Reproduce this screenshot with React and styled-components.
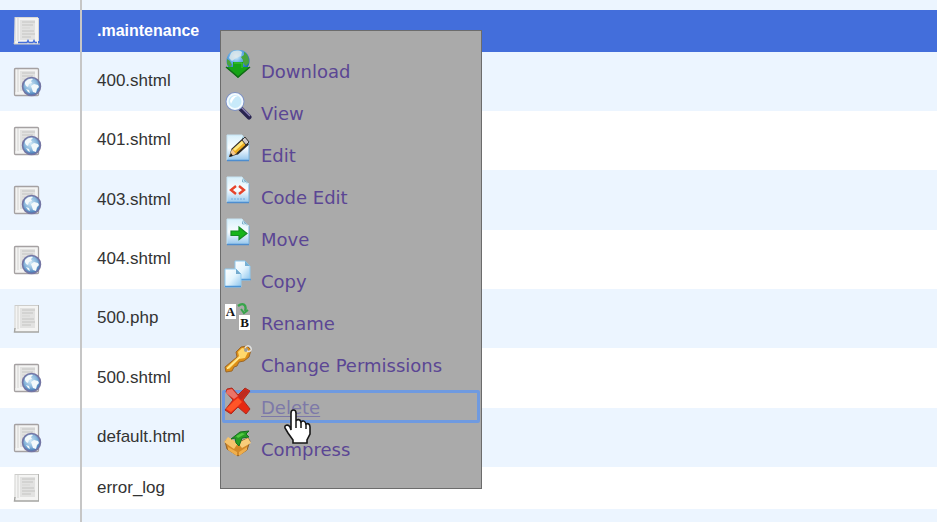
import styled, { createGlobalStyle } from "styled-components";

const GlobalStyle = createGlobalStyle`
  body {
    margin: 0;
    background: #fff;
    font-family: "Liberation Sans", Arial, sans-serif;
  }
`;

const Page = styled.main`
  position: relative;
  height: 100vh;
  overflow: hidden;
`;

const FileTable = styled.table`
  width: 100%;
  border-collapse: separate;
  border-spacing: 0;
`;

const rowHeights = { edge: 10, short: 42, tall: 59 };

const FileRow = styled.tr`
  height: ${(props) => rowHeights[props.$size]}px;
  background: ${(props) => (props.$selected ? "#436edb" : "#fff")};
  color: ${(props) => (props.$selected ? "#fff" : "#333")};
  font-size: ${(props) => (props.$selected ? "16px" : "17px")};
  font-weight: ${(props) => (props.$selected ? "bold" : "normal")};

  &:nth-child(odd) {
    background: #ecf5ff;
  }

  &:nth-child(3n + 5) {
    height: 60px;
  }
`;

const IconCell = styled.td`
  box-sizing: border-box;
  width: 82px;
  padding: 0 0 0 13px;
  border-right: 2px solid #c6c6c6;

  svg {
    display: block;
  }
`;

const NameCell = styled.td`
  padding: 0 16px 1px 15px;
  line-height: 20px;
`;

const Menu = styled.nav`
  position: absolute;
  top: 30px;
  left: 220px;
  box-sizing: border-box;
  width: 262px;
  padding: 23px 1px;
  border: 1px solid #6c6c6c;
  background: #aaa;
`;

const MenuList = styled.ul`
  display: flex;
  flex-direction: column;
  gap: 9px;
  margin: 0;
  padding: 0;
  list-style: none;
`;

const MenuLink = styled.a`
  display: flex;
  align-items: flex-start;
  gap: 9px;
  height: 33px;
  padding-left: 2px;
  color: ${(props) => (props.$active ? "#7d79a8" : "#5b4694")};
  font-family: "DejaVu Sans", Verdana, sans-serif;
  font-size: 18px;
  line-height: 35px;
  text-decoration: none;
  border-radius: 2px;
  outline: ${(props) => (props.$active ? "3px solid #6f9ae0" : "none")};
  outline-offset: -3px;

  span {
    text-decoration: ${(props) => (props.$active ? "underline" : "none")};
    text-underline-offset: 2px;
    text-decoration-thickness: 1px;
  }

  svg {
    position: relative;
    z-index: 1;
    flex: none;
    margin-top: -4px;
  }
`;

const Pointer = styled.svg`
  position: absolute;
  z-index: 2;
  top: 409px;
  left: 283px;
`;

const Sheet = () => (
  <>
    <path d="M2 1h23v27H1V26z" fill="#f4f4f3" />
    <path d="M7 4h15v20H7z" fill="#e2e2e1" />
    <path d="M2 1v24M5 2v23" stroke="#d3d3d1" />
    <path d="M9 6h13M9 9h11M9 15h12M9 18h13M9 21h9" stroke="#c4c4c2" />
    <path d="M9 12h8" stroke="#d5d5d3" />
  </>
);

const TextFile = () => (
  <svg width="29" height="30" viewBox="0 0 29 30" fill="none" aria-hidden="true">
    <Sheet />
    <path d="M2 1.500h23" stroke="#cdcdcb" />
    <path d="M25.500 1v27" stroke="#b4b4b1" />
    <path d="M2 24l-0.500 4h24.500" stroke="#a5a5a2" strokeWidth="1.400" />
  </svg>
);

const SelectedFile = () => (
  <svg width="29" height="30" viewBox="0 0 29 30" fill="none" aria-hidden="true">
    <Sheet />
    <path d="M2 1.500h23M25.500 2v23" stroke="#d9d9d6" />
    <path d="M2 24l-1 4h26" stroke="#d4d1c5" />
    <path d="M5 26.500h9l1-2 1 2h4l1-2 1 2h2" stroke="#436edb" strokeWidth="1.400" />
  </svg>
);

const WebFile = () => (
  <svg width="29" height="30" viewBox="0 0 29 30" fill="none" aria-hidden="true">
    <defs>
      <radialGradient id="webGlobe" cx="45%" cy="40%" r="60%">
        <stop offset="0" stopColor="#cfe8f6" />
        <stop offset="0.6" stopColor="#86b4da" />
        <stop offset="1" stopColor="#3a70b0" />
      </radialGradient>
    </defs>
    <Sheet />
    <rect x="1.500" y="1.500" width="24" height="27" rx="1" stroke="#a5a1a2" strokeWidth="1.300" />
    <circle cx="18.500" cy="19.500" r="9" fill="url(#webGlobe)" stroke="#7476a4" strokeWidth="1.500" />
    <path d="M12 15c2-3 6-4 8-3l-2 2 1 2-3 1-1 3-2-1-1-2zM18 19l3-2 4 1 1 2-2 2-1 4-3-1-1-3zM13 22l3 1 1 3-2-1z" fill="#f3f9fb" />
  </svg>
);

const MenuPicture = ({ children }) => (
  <svg width="28" height="30" viewBox="0 0 28 30" fill="none" aria-hidden="true">
    {children}
  </svg>
);

const BluePage = () => (
  <>
    <defs>
      <linearGradient id="bluePage" x1="0" y1="0" x2="0" y2="1">
        <stop offset="0" stopColor="#d8f0fb" />
        <stop offset="0.5" stopColor="#fafdff" />
        <stop offset="1" stopColor="#8fc3ec" />
      </linearGradient>
    </defs>
    <path d="M3 1h15l7 7v19H3z" fill="url(#bluePage)" />
    <path d="M3 1h15M3 1v25" stroke="#c6e3f3" />
    <path d="M3 26.500h22" stroke="#4d8dcf" strokeWidth="1.500" />
    <path d="M25 8v18" stroke="#79b0dc" />
    <path d="M18 1l7 7-7-2z" fill="#7caec9" />
    <path d="M18 1l2 5 5 2" stroke="#d7eef8" />
  </>
);

const DownloadIcon = () => (
  <MenuPicture>
    <defs>
      <radialGradient id="downloadGlobe" cx="42%" cy="30%" r="65%">
        <stop offset="0" stopColor="#e6f4fa" />
        <stop offset="0.4" stopColor="#70b5e8" />
        <stop offset="1" stopColor="#1763bd" />
      </radialGradient>
    </defs>
    <g transform="translate(0 -2)">
      <circle cx="14" cy="13" r="11.500" fill="url(#downloadGlobe)" />
      <path d="M20 4c4 2 5 6 5 11l-3 3-3-3v-3l-2-3 3-2zM3 11l3 2 2 4-2 2-3-3z" fill="#48a43d" />
      <path d="M7 5c3-3 8-3 11-1l-1 4-5 2-4 3-3-3z" fill="#dce6ea" opacity=".85" />
      <path d="M9 14h10v5h7L14 30 2 19h7z" fill="#16a416" />
      <path d="M2 19l12 10 12-10" stroke="#126a18" strokeWidth="1.500" />
      <path d="M10 15h8v5" stroke="#43c837" />
    </g>
  </MenuPicture>
);

const ViewIcon = () => (
  <MenuPicture>
    <path d="M17 17l8 8" stroke="#292450" strokeWidth="5" strokeLinecap="round" />
    <path d="M18 16l8 8" stroke="#8b82b4" strokeWidth="1.500" />
    <circle cx="11" cy="9.500" r="8.500" fill="#c8eafa" stroke="#7f93c6" strokeWidth="2" />
    <circle cx="11" cy="9.500" r="7.500" stroke="#f3fbff" strokeWidth="2" />
    <path d="M6 9c1-5 5-6 8-5-4 1-5 4-7 8z" fill="#fff" />
  </MenuPicture>
);

const EditIcon = () => (
  <MenuPicture>
    <BluePage />
    <path d="M6 22l2-7L19 5l5 5-11 10z" fill="#edae22" stroke="#343130" strokeWidth="1.300" />
    <path d="M9 15L20 5l2 2-11 10z" fill="#ffe77c" />
    <path d="M18 6l3-3 4 5-3 3z" fill="#cdc8ca" stroke="#373633" />
    <path d="M8 15l4 5-7 3z" fill="#f4c790" />
    <path d="M5 23l2-4 2 3z" fill="#171717" />
    <path d="M13 20L24 10" stroke="#302b25" strokeWidth="2" />
  </MenuPicture>
);

const CodeIcon = () => (
  <MenuPicture>
    <BluePage />
    <path d="M12 10l-5 4 5 4M15 10l5 4-5 4" stroke="#e6442c" strokeWidth="2.400" />
    <path d="M7 23h15" stroke="#75aee0" strokeDasharray="2 1" />
  </MenuPicture>
);

const MoveIcon = () => (
  <MenuPicture>
    <BluePage />
    <path d="M7 13h8V9l8 6.500-8 6v-4H7z" fill="#17b51a" stroke="#168a24" strokeWidth="1.200" />
  </MenuPicture>
);

const CopyIcon = () => (
  <MenuPicture>
    <defs>
      <linearGradient id="copyPage" x1="0" y1="0" x2="1" y2="1">
        <stop offset="0" stopColor="#fff" />
        <stop offset="0.5" stopColor="#e3f4fd" />
        <stop offset="1" stopColor="#8bc4ee" />
      </linearGradient>
    </defs>
    <path d="M11 1h10l5 5v14H11z" fill="url(#copyPage)" stroke="#8fcaf0" />
    <path d="M11 19.500h16" stroke="#519ada" strokeWidth="1.500" />
    <path d="M21 1v5h5z" fill="#76afd3" />
    <path d="M1 9h11l5 5v13H1z" fill="url(#copyPage)" stroke="#91ccf1" />
    <path d="M1 26.500h16" stroke="#4d95d6" strokeWidth="1.500" />
    <path d="M12 9v5h5z" fill="#75aacd" />
  </MenuPicture>
);

// the letters on the two tiles are drawn as text
const RenameIcon = () => (
  <MenuPicture>
    <rect x="1" y="2" width="11" height="15" fill="#fff" />
    <rect x="15" y="13" width="11" height="15" fill="#fff" />
    <g fill="#151515" fontFamily="Liberation Serif, serif" fontSize="13" fontWeight="700" textAnchor="middle">
      <text x="6.500" y="14">A</text>
      <text x="20.500" y="25">B</text>
    </g>
    <path d="M14 4c5-4 9-1 7 5" stroke="#38a44b" strokeWidth="2.400" />
    <path d="M17 7l3 4 4-3" stroke="#38a44b" strokeWidth="2" />
  </MenuPicture>
);

const KeyIcon = () => (
  <MenuPicture>
    <path d="M1 23L13 13l-1-5 5-5 6-1 4 4-2 7-5 4-5 1-2 4-3 1-2 4-6 1z" fill="#dc8e16" stroke="#9b672a" />
    <path d="M2 24L15 12l-1-4 4-4 5 1 1 3-3 6-6 1L5 25z" fill="#ffd86c" />
    <path d="M3 25L16 13" stroke="#fff0a5" />
    <circle cx="22" cy="6" r="2" fill="#9c9c99" />
    <path d="M21 4c1-3 5-3 6 0s-2 4-4 3" stroke="#e1e1df" strokeWidth="1.500" />
  </MenuPicture>
);

const DeleteIcon = () => (
  <MenuPicture>
    <path d="M3 3l5-1 6 7 7-7 5 3-7 9 7 9-4 5-8-7-7 7-6-4 8-10-7-8z" fill="#e62912" stroke="#a92c20" />
    <path d="M3 4l5-1 6 7-4 3-8-6z" fill="#e97469" />
    <path d="M14 10l7-7 4 3-8 8z" fill="#bd2a20" />
    <path d="M10 15l4-3 4 4-4 4-7 6-5-3z" fill="#ff5528" />
  </MenuPicture>
);

const CompressIcon = () => (
  <MenuPicture>
    <path d="M3 11l10 4 11-5 2 3-3 9-9 6-11-7-2-8z" fill="#d38928" stroke="#8f632b" />
    <path d="M0 14l4-5 10 6-4 6z" fill="#f5c36c" />
    <path d="M14 15l10-5 3 5-9 5z" fill="#f8cd7b" />
    <path d="M4 19l9 5v4l-9-6zM15 24l8-5v3l-8 6z" fill="#efae4c" />
    <path d="M12 15l-1-5-4 1 9-7 9-1-3 3 3 3-7 1-3 8z" fill="#269c23" stroke="#167222" />
    <path d="M12 8l6-3 3 1-7 4z" fill="#53c843" />
  </MenuPicture>
);

const files = [
  { name: ".maintenance", size: "short", icon: SelectedFile, selected: true },
  { name: "400.shtml", size: "tall", icon: WebFile },
  { name: "401.shtml", size: "tall", icon: WebFile },
  { name: "403.shtml", size: "tall", icon: WebFile },
  { name: "404.shtml", size: "tall", icon: WebFile },
  { name: "500.php", size: "tall", icon: TextFile },
  { name: "500.shtml", size: "tall", icon: WebFile },
  { name: "default.html", size: "tall", icon: WebFile },
  { name: "error_log", size: "short", icon: TextFile },
];

const actions = [
  { label: "Download", icon: DownloadIcon },
  { label: "View", icon: ViewIcon },
  { label: "Edit", icon: EditIcon },
  { label: "Code Edit", icon: CodeIcon },
  { label: "Move", icon: MoveIcon },
  { label: "Copy", icon: CopyIcon },
  { label: "Rename", icon: RenameIcon },
  { label: "Change Permissions", icon: KeyIcon },
  { label: "Delete", icon: DeleteIcon, active: true },
  { label: "Compress", icon: CompressIcon },
];

const App = () => (
  <Page>
    <GlobalStyle />
    <FileTable>
      <tbody>
        <FileRow $size="edge">
          <IconCell />
          <td />
        </FileRow>
        {files.map(({ name, size, icon: Icon, selected }) => (
          <FileRow key={name} $size={size} $selected={selected}>
            <IconCell>
              <Icon />
            </IconCell>
            <NameCell>{name}</NameCell>
          </FileRow>
        ))}
        <FileRow $size="short">
          <IconCell />
          <td />
        </FileRow>
      </tbody>
    </FileTable>
    <Menu aria-label="File actions">
      <MenuList>
        {actions.map(({ label, icon: Icon, active }) => (
          <li key={label}>
            <MenuLink href="#" $active={active}>
              <Icon />
              <span>{label}</span>
            </MenuLink>
          </li>
        ))}
      </MenuList>
    </Menu>
    <Pointer width="30" height="36" viewBox="0 0 30 36" fill="none" aria-hidden="true">
      <path
        d="M8 21V4c0-4 5-4 5 0v8c1-2 4-2 5 1 2-2 4-1 5 2 2-1 4 0 4 3v7l-3 6v3H10v-3l-5-7-3-5c-1-3 3-4 5-1z"
        fill="#fff"
        stroke="#171717"
        strokeWidth="1.600"
      />
      <path d="M13 12v7M18 13v6M23 15v5" stroke="#171717" strokeWidth="1.500" />
    </Pointer>
  </Page>
);

export default App;
